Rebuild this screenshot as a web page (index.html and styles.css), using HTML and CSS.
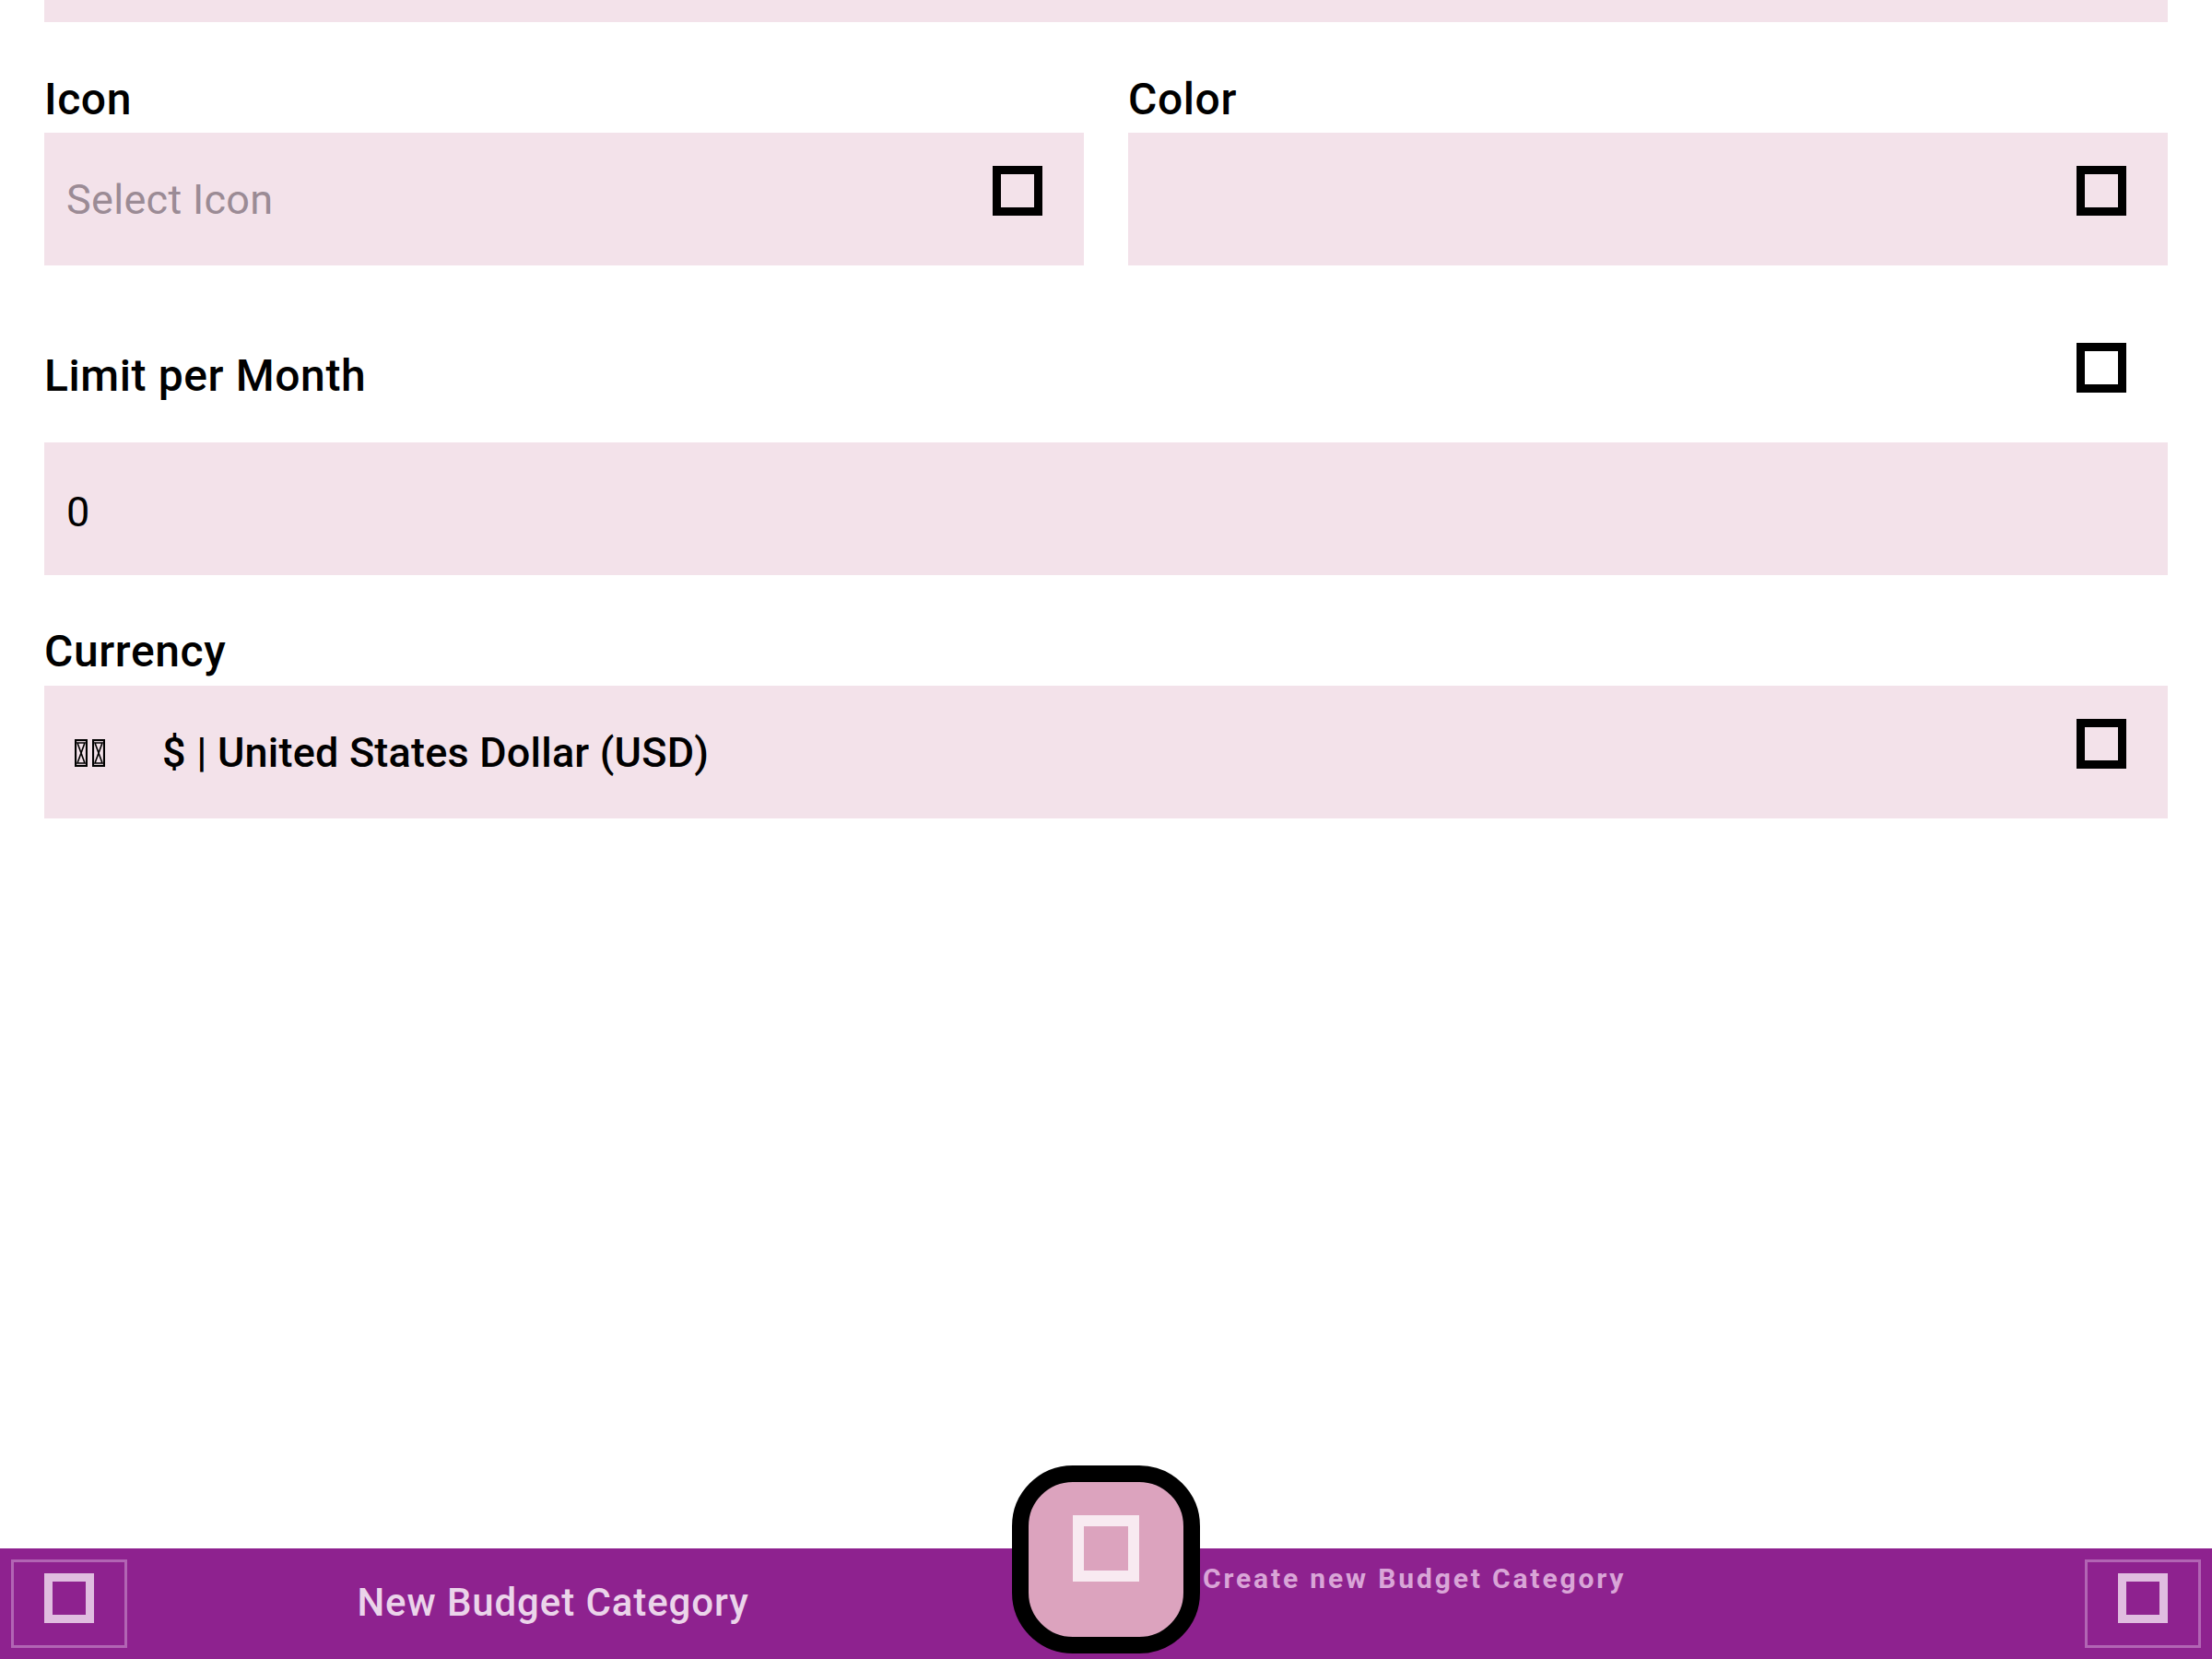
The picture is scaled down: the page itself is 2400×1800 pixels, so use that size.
FILE: index.html
```html
<!DOCTYPE html>
<html lang="en">
<head>
<meta charset="utf-8">
<title>New Budget Category</title>
<link rel="stylesheet" href="styles.css">
</head>
<body>
<div class="screen">
  <main class="form">
    <div class="prev-field"></div>
    <div class="pair">
      <div class="col">
        <div class="label">Icon</div>
        <div class="field">
          <span class="hint">Select Icon</span>
          <span class="tofu"></span>
        </div>
      </div>
      <div class="col">
        <div class="label">Color</div>
        <div class="field">
          <span class="hint"></span>
          <span class="tofu"></span>
        </div>
      </div>
    </div>
    <div class="label-row">
      <div class="label">Limit per Month</div>
      <span class="tofu"></span>
    </div>
    <div class="field limit-field">
      <span class="value">0</span>
    </div>
    <div class="label currency-label">Currency</div>
    <div class="field currency-field">
      <span class="flag">
        <svg class="flag-glyph" width="14" height="30" viewBox="0 0 14 30"><rect x="1" y="1" width="12" height="28" fill="none" stroke="#000" stroke-width="2.2"/><path d="M3 4 L11 4 L3 26 L11 26 Z" fill="none" stroke="#000" stroke-width="1.6"/></svg>
        <svg class="flag-glyph" width="14" height="30" viewBox="0 0 14 30"><rect x="1" y="1" width="12" height="28" fill="none" stroke="#000" stroke-width="2.2"/><path d="M3 4 L11 4 L3 26 L11 26 Z" fill="none" stroke="#000" stroke-width="1.6"/></svg>
      </span>
      <span class="value currency">$ | United States Dollar (USD)</span>
      <span class="tofu"></span>
    </div>
  </main>
  <footer class="bar">
    <div class="bar-left">
      <div class="bar-btn"><span class="tofu light"></span></div>
      <div class="bar-title">New Budget Category</div>
    </div>
    <div class="bar-right">
      <div class="fab-label">Create new Budget Category</div>
      <div class="bar-btn"><span class="tofu light"></span></div>
    </div>
  </footer>
  <div class="fab"><span class="tofu fab-icon"></span></div>
</div>
</body>
</html>
```
FILE: styles.css
```css
* { box-sizing: border-box; }
html, body {
  margin: 0;
  padding: 0;
  background: #ffffff;
}
body {
  font-family: Roboto, "Noto Sans", sans-serif;
  color: #000;
}
.screen {
  position: relative;
  width: 2400px;
  height: 1800px;
  overflow: hidden;
  display: flex;
  flex-direction: column;
}
.form {
  flex: 1;
  padding: 0 48px;
  display: flex;
  flex-direction: column;
}
.prev-field {
  height: 24px;
  background: #f3e2ea;
}
.pair {
  margin-top: 56px;
  display: grid;
  grid-template-columns: 1fr 1fr;
  column-gap: 48px;
}
.col {
  display: flex;
  flex-direction: column;
}
.label {
  font-size: 48px;
  font-weight: 500;
  line-height: 56px;
  letter-spacing: 0.6px;
  height: 56px;
}
.col .field {
  margin-top: 8px;
}
.field {
  height: 144px;
  background: #f3e2ea;
  display: flex;
  align-items: flex-start;
  padding-left: 24px;
}
.hint {
  font-size: 45px;
  line-height: 53px;
  padding-top: 46px;
  letter-spacing: 0.3px;
  color: #9b8b95;
}
.value {
  font-size: 45px;
  line-height: 53px;
  padding-top: 49px;
  color: #000;
}
.tofu {
  display: block;
  width: 54px;
  height: 54px;
  border: 9px solid #000;
  flex: none;
}
.field .tofu {
  margin-left: auto;
  margin-top: 36px;
  margin-right: 45px;
}
.label-row {
  margin-top: 84px;
  display: flex;
  justify-content: space-between;
  align-items: flex-start;
}
.label-row .label {
  margin-top: 8px;
}
.label-row .tofu {
  margin-right: 45px;
}
.limit-field {
  margin-top: 44px;
}
.currency-label {
  margin-top: 55px;
}
.currency-field {
  margin-top: 9px;
}
.flag {
  display: flex;
  gap: 5px;
  margin-left: 9px;
  margin-top: 58px;
}
.flag-glyph {
  display: block;
}
.currency {
  margin-left: 62px;
  padding-top: 46px;
  font-weight: 500;
  letter-spacing: 0.2px;
}
.bar {
  height: 120px;
  background: #8e228f;
  display: grid;
  grid-template-columns: 1fr 1fr;
}
.bar-left {
  display: grid;
  grid-template-columns: 150px 1fr 150px;
  align-items: start;
}
.bar-btn {
  width: 126px;
  height: 96px;
  margin-top: 12px;
  border: 3px solid #b265b4;
  display: flex;
  justify-content: center;
  align-items: flex-start;
}
.bar-left .bar-btn {
  margin-left: 12px;
}
.bar-btn .tofu {
  margin-top: 12px;
}
.tofu.light {
  border-color: #e0bde0;
}
.bar-title {
  text-align: center;
  font-size: 42px;
  font-weight: 500;
  line-height: 49px;
  letter-spacing: 0.9px;
  margin-top: 34px;
  color: #ebd4ea;
}
.bar-right {
  display: flex;
  align-items: flex-start;
}
.fab-label {
  margin-left: 105px;
  margin-top: 15px;
  font-size: 30px;
  line-height: 36px;
  font-weight: 700;
  letter-spacing: 2.85px;
  color: #d9a5d7;
}
.bar-right .bar-btn {
  margin-left: auto;
  margin-right: 12px;
}
.fab {
  position: absolute;
  left: 1098px;
  top: 1590px;
  width: 204px;
  height: 204px;
  border: 18px solid #000;
  border-radius: 66px;
  background: #dca3be;
  display: flex;
  justify-content: center;
  align-items: flex-start;
  padding-top: 36px;
}
.fab-icon {
  width: 72px;
  height: 72px;
  border: 12px solid #f8eaf1;
}
```
